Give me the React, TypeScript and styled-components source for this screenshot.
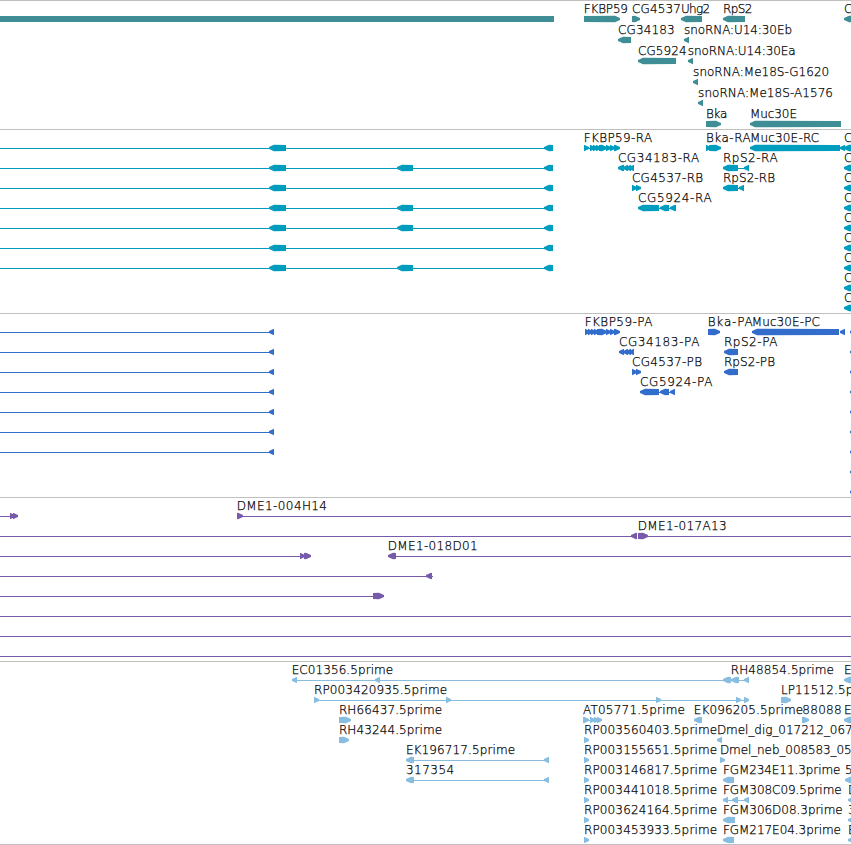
import React from 'react';
import styled, { createGlobalStyle } from 'styled-components';

type Direction = 'left' | 'right' | 'none';
type Span = [number, number];

interface Feature {
  direction: Direction;
  exons: Span[];
  line?: Span;
}

interface LabelData {
  text: string;
  start: number;
  end?: number;
}

interface RowData {
  labels?: LabelData[];
  features: Feature[];
}

interface TrackData {
  name: string;
  color: string;
  height: number;
  pitch: number;
  rows: RowData[];
}

const VIEW_WIDTH = 851;
const HEAD = 5;

const label = (text: string, start: number, end?: number): LabelData => ({ text, start, end });
const left = (exons: Span[], line?: Span): Feature => ({ direction: 'left', exons, line });
const right = (exons: Span[], line?: Span): Feature => ({ direction: 'right', exons, line });
const intron = (from: number, to: number): Feature => ({
  direction: 'none',
  exons: [],
  line: [from, to],
});

const shortTranscript = left([[269, 286], [544, 553]], [0, 553]);
const longTranscript = left([[269, 286], [397, 413], [544, 553]], [0, 553]);
const edgeGene = left([[844, 860]]);
const edgeProtein = left([[850, 860]]);
const protein = left([[269, 274]], [0, 270]);
const est = right([[584, 589]]);

const tracks: TrackData[] = [
  {
    name: 'genes',
    color: '#3f8e95',
    height: 129,
    pitch: 21,
    rows: [
      {
        labels: [
          label('FKBP59', 584.3, 627.3),
          label('CG4537', 632.5, 680.3),
          label('Uhg2', 681.5, 709.5),
          label('RpS2', 723.5, 751.7),
          label('C', 844.7),
        ],
        features: [
          { direction: 'none', exons: [[0, 554]] },
          right([[584, 620]]),
          right([[632, 640]]),
          left([[681, 702]]),
          left([[723, 745]]),
          edgeGene,
        ],
      },
      {
        labels: [label('CG34183', 618.5, 674), label('snoRNA:U14:30Eb', 684.7, 791.3)],
        features: [left([[618, 631]]), left([[684, 689]])],
      },
      {
        labels: [label('CG5924', 638.5, 686), label('snoRNA:U14:30Ea', 688.4, 795)],
        features: [left([[638, 676]]), left([[688, 693]])],
      },
      {
        labels: [label('snoRNA:Me18S-G1620', 693.7, 828.5)],
        features: [left([[693, 698]])],
      },
      {
        labels: [label('snoRNA:Me18S-A1576', 698.7, 832.3)],
        features: [left([[698, 703]])],
      },
      {
        labels: [label('Bka', 706.5, 726.7), label('Muc30E', 750.5, 796.3)],
        features: [right([[706, 721]]), left([[750, 841]])],
      },
    ],
  },
  {
    name: 'transcripts',
    color: '#009dbf',
    height: 184,
    pitch: 20,
    rows: [
      {
        labels: [
          label('FKBP59-RA', 584.3, 651.5),
          label('Bka-RA', 706.5, 750),
          label('Muc30E-RC', 750.5, 818.5),
          label('C', 844.7),
        ],
        features: [
          shortTranscript,
          right(
            [[584, 589], [590, 595], [593, 598], [596, 601], [599, 607], [606, 611], [610, 615], [614, 620]],
            [584, 620],
          ),
          right([[706, 711], [709, 721]]),
          left([[750, 840], [840, 845]], [840, 846]),
          edgeGene,
        ],
      },
      {
        labels: [
          label('CG34183-RA', 618.5, 698.5),
          label('RpS2-RA', 723.5, 777),
          label('C', 844.7),
        ],
        features: [
          longTranscript,
          left([[618, 624], [623, 628], [626, 631], [629, 634]], [619, 634]),
          left([[723, 738], [744, 749]], [738, 745]),
          edgeGene,
        ],
      },
      {
        labels: [
          label('CG4537-RB', 632.5, 702.5),
          label('RpS2-RB', 723.5, 774.3),
          label('C', 844.7),
        ],
        features: [
          shortTranscript,
          right([[632, 637], [636, 641]]),
          left([[723, 738], [739, 744]], [738, 740]),
          edgeGene,
        ],
      },
      {
        labels: [label('CG5924-RA', 638.5, 711), label('C', 844.7)],
        features: [
          longTranscript,
          left([[638, 659], [660, 669], [670, 676]], [658, 676]),
          edgeGene,
        ],
      },
      { labels: [label('C', 844.7)], features: [longTranscript, edgeGene] },
      { labels: [label('C', 844.7)], features: [shortTranscript, edgeGene] },
      { labels: [label('C', 844.7)], features: [longTranscript, edgeGene] },
      { labels: [label('C', 844.7)], features: [edgeGene] },
      { labels: [label('C', 844.7)], features: [edgeGene] },
    ],
  },
  {
    name: 'proteins',
    color: '#336dcc',
    height: 184,
    pitch: 20,
    rows: [
      {
        labels: [
          label('FKBP59-PA', 585.3, 651.7),
          label('Bka-PA', 708.3, 752),
          label('Muc30E-PC', 752.3, 819.3),
        ],
        features: [
          protein,
          right(
            [[585, 590], [588, 593], [591, 596], [594, 599], [597, 607], [606, 611], [610, 615], [614, 620]],
            [585, 620],
          ),
          right([[708, 720]]),
          left([[752, 839], [840, 845]]),
          edgeProtein,
        ],
      },
      {
        labels: [label('CG34183-PA', 619.5, 698.7), label('RpS2-PA', 724.5, 776.7)],
        features: [
          protein,
          left([[619, 624], [623, 628], [626, 631], [629, 634]], [620, 634]),
          left([[724, 738]]),
          edgeProtein,
        ],
      },
      {
        labels: [label('CG4537-PB', 632.7, 701.3), label('RpS2-PB', 724.5, 774.3)],
        features: [protein, right([[632, 637], [636, 641]]), left([[724, 738]]), edgeProtein],
      },
      {
        labels: [label('CG5924-PA', 640.7, 711.7)],
        features: [
          protein,
          left([[640, 659], [660, 669], [670, 675]], [658, 675]),
          edgeProtein,
        ],
      },
      { features: [protein, edgeProtein] },
      { features: [protein, edgeProtein] },
      { features: [protein, edgeProtein] },
      { features: [edgeProtein] },
      { features: [edgeProtein] },
    ],
  },
  {
    name: 'clones',
    color: '#775baa',
    height: 164,
    pitch: 20,
    rows: [
      {
        labels: [label('DME1-004H14', 237.3, 326.3)],
        features: [
          right([[10, 15], [13, 18]], [0, 14]),
          right([[237, 243]], [238, VIEW_WIDTH]),
        ],
      },
      {
        labels: [label('DME1-017A13', 638.3, 726)],
        features: [
          left([[631, 637]], [0, 632]),
          right([[638, 648]], [646, VIEW_WIDTH]),
        ],
      },
      {
        labels: [label('DME1-018D01', 388.3, 477)],
        features: [
          right([[300, 305], [304, 311]], [0, 306]),
          left([[388, 396]], [396, VIEW_WIDTH]),
        ],
      },
      { features: [left([[426, 432]], [0, 433])] },
      { features: [right([[373, 384]], [0, 374])] },
      { features: [intron(0, VIEW_WIDTH)] },
      { features: [intron(0, VIEW_WIDTH)] },
      { features: [intron(0, VIEW_WIDTH)] },
    ],
  },
  {
    name: 'ests',
    color: '#89bddf',
    height: 183,
    pitch: 20,
    rows: [
      {
        labels: [
          label('EC01356.5prime', 292.3, 392.5),
          label('RH48854.5prime', 731.3, 833.3),
          label('E', 844.7),
        ],
        features: [
          left([[292, 297], [375, 380], [723, 731], [731, 739], [744, 749]], [293, 748]),
          edgeGene,
        ],
      },
      {
        labels: [
          label('RP003420935.5prime', 314.5, 446.5),
          label('LP11512.5prime', 781.5, 880.5),
        ],
        features: [
          right([[314, 319], [446, 451], [656, 661], [736, 741], [744, 749]], [315, 748]),
          right([[781, 791]]),
        ],
      },
      {
        labels: [
          label('RH66437.5prime', 339.5, 441.5),
          label('AT05771.5prime', 583.5, 684.3),
          label('EK096205.5prime', 694.4, 802.5),
          label('88088', 802.8, 841),
          label('E', 844.7),
        ],
        features: [
          right([[339, 351]]),
          right([[583, 589], [590, 595], [594, 599], [597, 602]], [584, 602]),
          left([[694, 702]]),
          right([[802, 809]]),
          edgeGene,
        ],
      },
      {
        labels: [
          label('RH43244.5prime', 339.5, 441.5),
          label('RP003560403.5prime', 584.5, 716.5),
          label('Dmel_dig_017212_067', 717.5, 852),
        ],
        features: [right([[339, 349]]), est, left([[717, 722]])],
      },
      {
        labels: [
          label('EK196717.5prime', 406.5, 514.5),
          label('RP003155651.5prime', 584.5, 716.5),
          label('Dmel_neb_008583_05', 720.5, 851),
        ],
        features: [left([[406, 414], [544, 549]], [414, 548]), est, right([[720, 725]])],
      },
      {
        labels: [
          label('317354', 406.5, 453.5),
          label('RP003146817.5prime', 584.5, 716.5),
          label('FGM234E11.3prime', 723.5, 839.7),
          label('5', 845.5),
        ],
        features: [
          left([[406, 414], [544, 549]], [414, 548]),
          est,
          left([[723, 734]]),
          left([[845, 860]]),
        ],
      },
      {
        labels: [
          label('RP003441018.5prime', 584.5, 716.5),
          label('FGM308C09.5prime', 723.5, 841),
          label('D', 848.5),
        ],
        features: [
          est,
          left([[723, 728], [732, 738], [744, 749]], [724, 748]),
          left([[848, 860]]),
        ],
      },
      {
        labels: [
          label('RP003624164.5prime', 584.5, 716.5),
          label('FGM306D08.3prime', 723.5, 842),
          label('3', 848.5),
        ],
        features: [est, left([[723, 735]]), left([[848, 860]])],
      },
      {
        labels: [
          label('RP003453933.5prime', 584.5, 716.5),
          label('FGM217E04.3prime', 723.5, 840.3),
          label('E', 848.5),
        ],
        features: [est, left([[723, 734]]), left([[848, 860]])],
      },
    ],
  },
];

// An exon is a 6px bar whose leading end narrows to a blunt tip.
const exonPoints = ([from, to]: Span, direction: Direction) => {
  const head = Math.min(HEAD, to - from);
  if (direction === 'left') {
    return `${from},15 ${from + head},12.8 ${to},13 ${to},19 ${from + head},19.2 ${from},17`;
  }
  if (direction === 'right') {
    return `${from},13 ${to - head},12.8 ${to},15 ${to},17 ${to - head},19.2 ${from},19`;
  }
  return `${from},13 ${to},13 ${to},19 ${from},19`;
};

const TrackRow = ({ row, pitch, color }: { row: RowData; pitch: number; color: string }) => (
  <RowSvg $pitch={pitch} $color={color}>
    {row.features.map((feature, i) => (
      <g key={i}>
        {feature.line && (
          <rect x={feature.line[0]} y={16} width={feature.line[1] - feature.line[0]} height={1} />
        )}
        {feature.exons.map((exon, j) => (
          <polygon key={j} points={exonPoints(exon, feature.direction)} />
        ))}
      </g>
    ))}
    {row.labels?.map(({ text, start, end }) => (
      <Label
        key={text}
        x={start - 0.6}
        y={10}
        textLength={end ? end - start + 1.3 : undefined}
        lengthAdjust="spacing"
      >
        {text}
      </Label>
    ))}
  </RowSvg>
);

const App = () => {
  return (
    <>
      <GlobalStyle />
      <Browser>
        {tracks.map(({ name, color, height, pitch, rows }) => (
          <Track key={name} $height={height}>
            {rows.map((row, i) => (
              <TrackRow key={i} row={row} pitch={pitch} color={color} />
            ))}
          </Track>
        ))}
      </Browser>
    </>
  );
};

export default App;

const GlobalStyle = createGlobalStyle`
  body {
    margin: 0;
    background-color: #fff;
    overflow: hidden;
  }
`;

const Browser = styled.main`
  display: flex;
  flex-direction: column;
  width: ${VIEW_WIDTH}px;
  border-bottom: 1px solid #c0c0c0;
  overflow: hidden;
`;

const Track = styled.section<{ $height: number }>`
  display: flex;
  flex-direction: column;
  box-sizing: border-box;
  height: ${({ $height }) => $height}px;
  padding-top: 2px;
  border-top: 1px solid #c0c0c0;
`;

const RowSvg = styled.svg<{ $pitch: number; $color: string }>`
  display: block;
  flex: none;
  width: 100%;
  height: ${({ $pitch }) => $pitch}px;
  fill: ${({ $color }) => $color};
`;

const Label = styled.text`
  fill: #000;
  stroke: #000;
  stroke-width: 0.25px;
  font-family: 'DejaVu Sans', sans-serif;
  font-size: 12px;
  font-weight: 200;
`;
